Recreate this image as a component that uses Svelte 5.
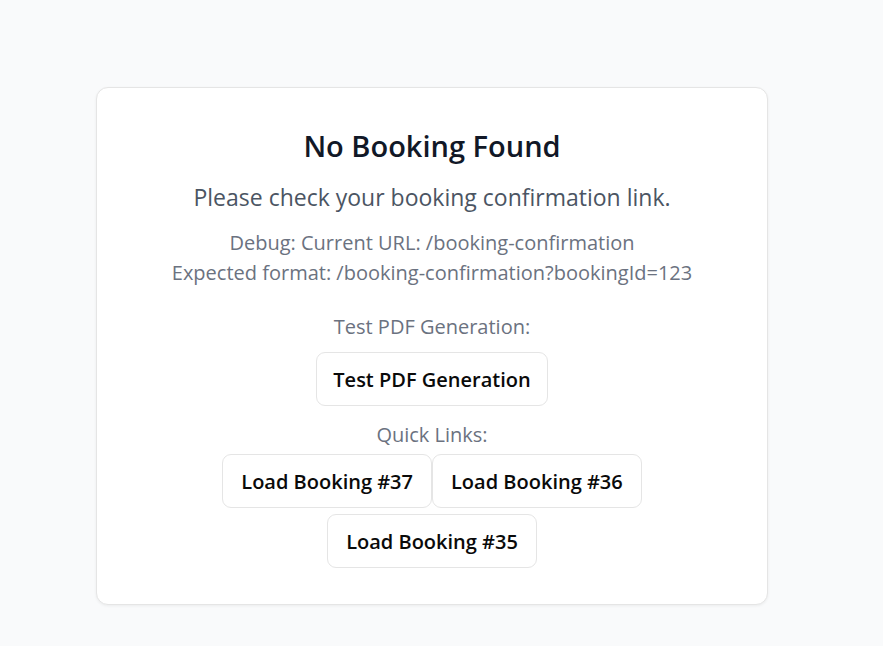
<script>
  const bookings = [37, 36, 35];
  let current = $state('/booking-confirmation');
</script>

<main class="page">
  <section class="card">
    <h1>No Booking Found</h1>
    <p class="lead">Please check your booking confirmation link.</p>
    <p class="debug">
      Debug: Current URL: {current}<br />
      Expected format: /booking-confirmation?bookingId=123
    </p>
    <div class="group">
      <p>Test PDF Generation:</p>
      <button type="button">Test PDF Generation</button>
    </div>
    <div class="group links">
      <p>Quick Links:</p>
      <div class="row">
        {#each bookings as id}
          <button type="button" onclick={() => (current = `/booking-confirmation?bookingId=${id}`)}>Load Booking #{id}</button>
        {/each}
      </div>
    </div>
  </section>
</main>

<style>
  :global(body) {
    background: #f9fafb;
  }
  .page {
    box-sizing: border-box;
    min-height: 100vh;
    padding: 87px 115px 41px 96px;
    font-family: "Segoe UI", "Open Sans", "Noto Sans", sans-serif;
  }
  .card {
    box-sizing: border-box;
    max-width: 672px;
    margin: 0 auto;
    padding: 37px 60px 36px;
    border: 1px solid #e5e5e5;
    border-radius: 12px;
    background: #fff;
    box-shadow: 0 1px 3px rgba(0, 0, 0, 0.06);
    text-align: center;
    color: #6b7280;
    font-size: 20px;
    line-height: 30px;
  }
  h1, p {
    margin: 0;
  }
  h1 {
    color: #111827;
    font-size: 29px;
    font-weight: 600;
    line-height: 42px;
    margin-bottom: 12px;
  }
  .lead {
    color: #4b5563;
    font-size: 23px;
    line-height: 36px;
    margin-bottom: 13px;
  }
  .group {
    margin-top: 24px;
  }
  .group p {
    margin-bottom: 10px;
  }
  .links {
    margin-top: 14px;
  }
  .group.links p {
    margin-bottom: 4px;
  }
  .row {
    display: flex;
    flex-wrap: wrap;
    justify-content: center;
    row-gap: 6px;
  }
  button {
    height: 54px;
    padding: 2px 16px 0;
    border: 1px solid #e5e5e5;
    border-radius: 9px;
    background: #fff;
    color: #0a0a0a;
    font: 600 20px/30px "Segoe UI", "Open Sans", "Noto Sans", sans-serif;
    cursor: pointer;
  }
  .row button {
    padding: 2px 18px 0;
  }
</style>
